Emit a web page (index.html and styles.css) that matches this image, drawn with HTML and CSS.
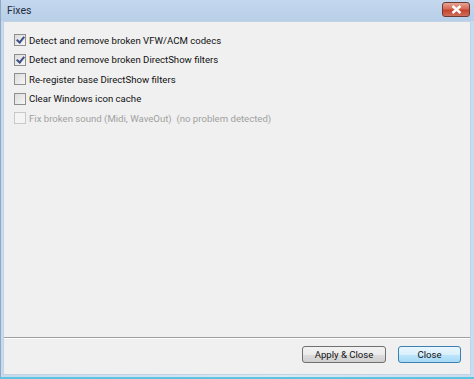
FILE: index.html
```html
<!DOCTYPE html>
<html lang="en">
<head>
  <meta charset="UTF-8">
  <title>Fixes</title>
  <link rel="stylesheet" href="styles.css">
</head>
<body>
  <div class="window">
    <!-- Title bar -->
    <div class="titlebar">
      <span class="title">Fixes</span>
      <button class="close-x" aria-label="Close">
        <svg width="11" height="9" viewBox="0 0 11 9">
          <path d="M1.5 1 L9.5 8 M9.5 1 L1.5 8" stroke="#fff" stroke-width="2.4" fill="none"/>
        </svg>
      </button>
    </div>

    <div class="client">
      <div class="options">
        <label class="option"><span class="box checked"></span>Detect and remove broken VFW/ACM codecs</label>
        <label class="option"><span class="box checked"></span>Detect and remove broken DirectShow filters</label>
        <label class="option"><span class="box"></span>Re-register base DirectShow filters</label>
        <label class="option"><span class="box"></span>Clear Windows icon cache</label>
        <label class="option disabled"><span class="box"></span>Fix broken sound (Midi, WaveOut)&nbsp; (no problem detected)</label>
      </div>

      <div class="footer">
        <button class="btn">Apply &amp; Close</button>
        <button class="btn default">Close</button>
      </div>
    </div>
  </div>
</body>
</html>
```

FILE: styles.css
```css
html, body {
  margin: 0;
  padding: 0;
}

body {
  width: 474px;
  height: 379px;
  font-family: Roboto, "Liberation Sans", sans-serif;
  font-size: 9.6px;
  color: #111;
  background-color: #b9d1ea;
}

.window {
  height: 379px;
  display: flex;
  flex-direction: column;
  background: linear-gradient(to right, #c7daee, #dbe8f5 60%, #c9dcef);
  box-sizing: border-box;
  border-left: 1px solid #8fa8c4;
  border-bottom: 2px solid #5bc4de;
}

.titlebar {
  height: 21px;
  display: flex;
  align-items: center;
  justify-content: space-between;
  padding: 0 4px 0 6px;
  background: linear-gradient(to bottom, #c4d8ee, #b8cfe8);
}

.title {
  font-size: 10.5px;
  color: #1e2b3c;
}

.close-x {
  width: 28px;
  height: 15px;
  margin-top: -2px;
  padding: 0;
  display: flex;
  align-items: center;
  justify-content: center;
  border: 1px solid #6d3a35;
  border-radius: 3px;
  background: linear-gradient(to bottom, #e6a595, #d76a56 45%, #c4432d 55%, #d0705c);
}

.client {
  flex: 1;
  margin: 0 3px 2px 2px;
  display: flex;
  flex-direction: column;
  background-color: #f0f0f0;
  border: 1px solid #c2d3e6;
}

.options {
  flex: 1;
  display: flex;
  flex-direction: column;
  gap: 3px;
  padding: 10px 0 0 10px;
}

.option {
  display: flex;
  align-items: center;
  gap: 3px;
  height: 16.5px;
}

.box {
  width: 10px;
  height: 10px;
  border: 1px solid #8f8f8f;
  background: linear-gradient(135deg, #dcdcdc, #f6f6f6);
  position: relative;
}

.box.checked::after {
  content: "";
  position: absolute;
  left: 3px;
  top: 0;
  width: 3px;
  height: 6px;
  border: solid #3b4f86;
  border-width: 0 2px 2px 0;
  transform: rotate(40deg);
}

.option.disabled {
  color: #a0a0a0;
}

.option.disabled .box {
  border-color: #c8c8c8;
  background: #f4f4f4;
}

.footer {
  display: flex;
  justify-content: flex-end;
  gap: 12px;
  padding: 8px 9px 11px 0;
  border-top: 1px solid #a0a0a0;
  box-shadow: inset 0 1px 0 #fff;
}

.btn {
  font-family: inherit;
  font-size: 9.6px;
  color: #111;
  height: 17px;
  padding: 0;
  border: 1px solid #707070;
  border-radius: 3px;
  background: linear-gradient(to bottom, #f2f2f2, #ebebeb 50%, #dddddd 51%, #cfcfcf);
  width: 84px;
}

.btn.default {
  width: 63px;
  border-color: #3c7fb1;
  background: linear-gradient(to bottom, #eaf6fd, #d9f0fc 50%, #bee6fd 51%, #a7d9f5);
}
```
